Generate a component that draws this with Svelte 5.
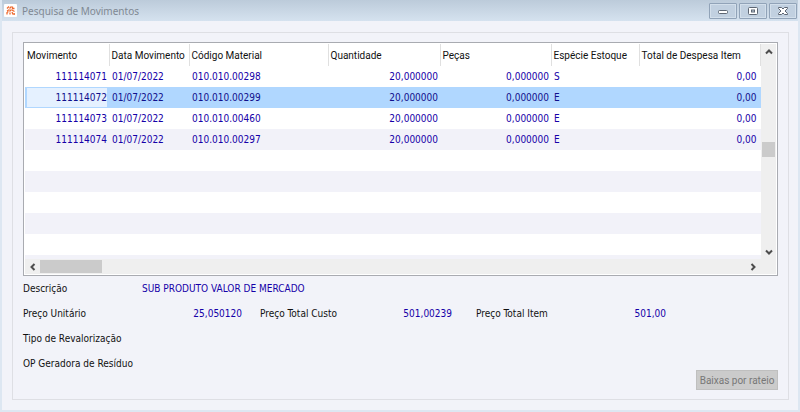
<script>
    const columns = [
        { key: 'movimento', label: 'Movimento', width: 84, align: 'right' },
        { key: 'data', label: 'Data Movimento', width: 80 },
        { key: 'codigo', label: 'Código Material', width: 139 },
        { key: 'quantidade', label: 'Quantidade', width: 112, align: 'right' },
        { key: 'pecas', label: 'Peças', width: 111, align: 'right' },
        { key: 'especie', label: 'Espécie Estoque', width: 88 },
        { key: 'despesa', label: 'Total de Despesa Item', align: 'right' }
    ];

    const rows = [
        { movimento: '111114071', data: '01/07/2022', codigo: '010.010.00298', quantidade: '20,000000', pecas: '0,000000', especie: 'S', despesa: '0,00' },
        { movimento: '111114072', data: '01/07/2022', codigo: '010.010.00299', quantidade: '20,000000', pecas: '0,000000', especie: 'E', despesa: '0,00' },
        { movimento: '111114073', data: '01/07/2022', codigo: '010.010.00460', quantidade: '20,000000', pecas: '0,000000', especie: 'E', despesa: '0,00' },
        { movimento: '111114074', data: '01/07/2022', codigo: '010.010.00297', quantidade: '20,000000', pecas: '0,000000', especie: 'E', despesa: '0,00' }
    ];

    // empty lines that keep the stripes going down to the scrollbar
    const emptyRows = Array(6);

    let selected = $state('111114072');
</script>

<div class="window">
    <header class="titlebar">
        <svg class="logo" viewBox="0 0 13 13" aria-hidden="true">
            <rect width="13" height="13" rx="1" fill="#fff" />
            <path d="M3 4.500l2-2M5.500 4.500l2-2M8.500 2.500v2h2M3 7l2.500-1.500M5.500 7.500l2-2M8 6l2.500 1.500M3 10.500V8.500l1.500-1M6 10.500V8.500M8 8l1 2.500M10.200 9v2" fill="none" stroke="#ee6a30" stroke-width="1.3" />
        </svg>
        <h1>Pesquisa de Movimentos</h1>
        <div class="controls">
            <button type="button" aria-label="Minimizar">
                <svg viewBox="0 0 12 10">
                    <rect x="1.5" y="4.5" width="9" height="3" rx="1" fill="#fff" stroke="#5d6673" />
                </svg>
            </button>
            <button type="button" aria-label="Maximizar">
                <svg viewBox="0 0 12 10">
                    <rect x="1.5" y="1.5" width="9" height="7" rx="1" fill="#fff" stroke="#5d6673" />
                    <rect x="4.5" y="4" width="3" height="2" fill="#c3d1e0" stroke="#5d6673" />
                </svg>
            </button>
            <button type="button" aria-label="Fechar">
                <svg viewBox="0 0 12 10">
                    <path d="M1.5 1.5h3L6 3l1.500-1.500h3v1L8 5l2.500 2.500v1h-3L6 7 4.500 8.500h-3v-1L4 5 1.500 2.500z" fill="#fff" stroke="#5d6673" />
                </svg>
            </button>
        </div>
    </header>

    <main class="panel">
        <div class="grid">
            <div class="rows">
                <table>
                    <colgroup>
                        {#each columns as col}
                            <col style={col.width ? `width: ${col.width}px` : ''} />
                        {/each}
                    </colgroup>
                    <thead>
                        <tr>
                            {#each columns as col}
                                <th>{col.label}</th>
                            {/each}
                        </tr>
                    </thead>
                    <tbody>
                        {#each rows as row}
                            <tr class:selected={row.movimento === selected} onclick={() => (selected = row.movimento)}>
                                {#each columns as col}
                                    <td class:right={col.align === 'right'}><span>{row[col.key]}</span></td>
                                {/each}
                            </tr>
                        {/each}
                        {#each emptyRows as _}
                            <tr><td colspan={columns.length}></td></tr>
                        {/each}
                    </tbody>
                </table>
            </div>
            <div class="scroll vertical">
                <button type="button" aria-label="Rolar para cima">
                    <svg viewBox="0 0 8 8"><path d="M1 5.500L4 2.500l3 3" /></svg>
                </button>
                <div class="thumb"></div>
                <button type="button" aria-label="Rolar para baixo">
                    <svg viewBox="0 0 8 8"><path d="M1 2.500l3 3 3-3" /></svg>
                </button>
            </div>
            <div class="scroll horizontal">
                <button type="button" aria-label="Rolar para a esquerda">
                    <svg viewBox="0 0 8 8"><path d="M5.500 1l-3 3 3 3" /></svg>
                </button>
                <div class="thumb"></div>
                <button type="button" aria-label="Rolar para a direita">
                    <svg viewBox="0 0 8 8"><path d="M2.500 1l3 3-3 3" /></svg>
                </button>
            </div>
        </div>

        <div class="footer">
            <div class="details">
                <label for="descricao">Descrição</label>
                <output id="descricao" class="text">SUB PRODUTO VALOR DE MERCADO</output>

                <label for="unitario">Preço Unitário</label>
                <output id="unitario">25,050120</output>
                <label for="custo" class="next">Preço Total Custo</label>
                <output id="custo">501,00239</output>
                <label for="item" class="next">Preço Total Item</label>
                <output id="item">501,00</output>

                <label for="tipo">Tipo de Revalorização</label>
                <output id="tipo" class="text"></output>

                <label for="op">OP Geradora de Resíduo</label>
                <output id="op" class="text"></output>
            </div>
            <button type="button" disabled>Baixas por rateio</button>
        </div>
    </main>
</div>

<style>
    :global(body) {
        margin: 0;
    }
    .window {
        display: flex;
        flex-direction: column;
        box-sizing: border-box;
        min-height: 100vh;
        border: 2px solid #dde7f2;
        border-top: 0;
        background: #f2f3f9;
        color: #111;
        font-family: "DejaVu Sans Condensed", "DejaVu Sans", sans-serif;
        font-stretch: condensed;
        font-size: 10px;
    }
    button {
        display: flex;
        align-items: center;
        justify-content: center;
        padding: 0;
        border: 0;
        background: none;
        white-space: nowrap;
    }
    .titlebar {
        display: flex;
        align-items: center;
        gap: 5px;
        height: 21px;
        padding: 0 1px 0 2px;
        background: linear-gradient(#bccbda, #d5e2ef);
    }
    .logo {
        width: 13px;
        height: 13px;
    }
    h1 {
        flex: 1;
        margin: 0;
        color: #808993;
        font: 10px "Noto Sans", sans-serif;
    }
    .controls {
        display: flex;
        gap: 2px;
    }
    .controls button {
        width: 28px;
        height: 16px;
        border: 1px solid #91a3b8;
        border-radius: 1px;
        background: #c1d0e0;
        box-shadow: inset 0 0 0 1px #d3dfeb;
    }
    .controls svg {
        width: 12px;
        height: 10px;
    }
    .panel {
        display: flex;
        flex: 1;
        flex-direction: column;
        margin: 11px 9px 10px 10px;
        padding: 9px 10px;
        border: 1px solid #dedfe4;
    }
    .grid {
        display: grid;
        grid-template: 215px 15px / 1fr 15px;
        padding: 1px;
        border: 1px solid #a9abb1;
        background: #fff;
    }
    .rows {
        overflow: hidden;
    }
    table {
        width: 100%;
        border-collapse: collapse;
        table-layout: fixed;
    }
    th,
    td {
        box-sizing: border-box;
        height: 21px;
        padding: 0 2px;
        white-space: nowrap;
    }
    th {
        height: 22px;
        border-right: 1px solid #e0e0e0;
        font: 10px Roboto, sans-serif;
        text-align: left;
    }
    td {
        padding: 0 2px 0 3px;
        color: #1500a8;
    }
    td:last-child {
        padding-right: 4px;
    }
    td.right {
        text-align: right;
    }
    tbody tr:nth-child(even) {
        background: #f2f2f9;
    }
    tbody tr.selected {
        background: #b0d7ff;
    }
    .selected td {
        color: #10108c;
    }
    .selected td:first-child {
        padding: 0 2px;
    }
    .selected td:first-child span {
        display: block;
        background: #e5f1ff;
        line-height: 19px;
    }
    .scroll {
        display: flex;
        background: #efefef;
    }
    .scroll button {
        width: 15px;
        height: 15px;
    }
    .scroll svg {
        width: 8px;
        height: 8px;
        fill: none;
        stroke: #4d4d4d;
        stroke-width: 2;
    }
    .thumb {
        background: #cbcbcb;
    }
    .vertical {
        flex-direction: column;
    }
    .vertical .thumb {
        height: 15px;
        margin: 83px 1px auto;
    }
    .horizontal {
        grid-column: 1 / -1;
        padding-right: 16px;
    }
    .horizontal .thumb {
        width: 62px;
        margin: 1px auto 1px 0;
    }
    .footer {
        display: flex;
        flex: 1;
        align-items: flex-start;
        justify-content: space-between;
    }
    .details {
        display: grid;
        grid-template-columns: 119px 100px 114px 96px 120px 94px;
        grid-auto-rows: 25px;
        align-items: center;
    }
    .details output {
        color: #1500a8;
        text-align: right;
    }
    .details output.text {
        grid-column: 2 / -1;
        text-align: left;
    }
    .details .next {
        padding-left: 18px;
    }
    .details .next ~ .next {
        padding-left: 24px;
    }
    .footer button {
        align-self: flex-end;
        width: 82px;
        height: 20px;
        border: 1px solid #bfbfbf;
        background: #cbcbcb;
        color: #777;
        font: 10px Roboto, sans-serif;
    }
</style>
